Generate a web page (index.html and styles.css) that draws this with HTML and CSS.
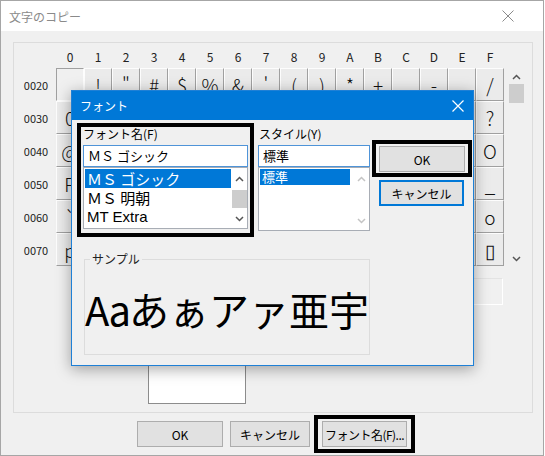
FILE: index.html
```html
<!DOCTYPE html>
<html lang="ja">
<head>
    <meta charset="UTF-8">
    <title>文字のコピー</title>
    <link rel="stylesheet" href="styles.css">
</head>
<body>
    <div class="window">
        <!-- Title bar -->
        <div class="titlebar">
            <span class="title">文字のコピー</span>
            <svg class="close" width="12" height="12" viewBox="0 0 12 12">
                <path d="M0.5 0.5 L11.5 11.5 M11.5 0.5 L0.5 11.5" stroke="#8a8a8a" stroke-width="1" fill="none"/>
            </svg>
        </div>

        <div class="content">
            <div class="group">
                <div class="map-row">
                    <div class="charmap" id="charmap"></div>
                    <div class="vscroll">
                        <svg width="9" height="6" viewBox="0 0 9 6"><polyline points="1,5 4.5,1.5 8,5" stroke="#555" stroke-width="1.5" fill="none"/></svg>
                        <div class="thumb"></div>
                        <div class="track"></div>
                        <svg width="9" height="6" viewBox="0 0 9 6"><polyline points="1,1 4.5,4.5 8,1" stroke="#555" stroke-width="1.5" fill="none"/></svg>
                    </div>
                </div>
                <div class="copy-box"></div>
                <div class="preview"></div>
            </div>

            <div class="actions">
                <button class="btn btn-ok">OK</button>
                <button class="btn btn-cancel">キャンセル</button>
                <div class="mark mark-font">
                    <button class="btn btn-font">フォント名(F)...</button>
                </div>
            </div>
        </div>
    </div>

    <!-- Font dialog -->
    <div class="dialog">
        <div class="dlg-title">
            <span>フォント</span>
            <svg width="12" height="12" viewBox="0 0 12 12">
                <path d="M0.5 0.5 L11.5 11.5 M11.5 0.5 L0.5 11.5" stroke="#fff" stroke-width="1.2" fill="none"/>
            </svg>
        </div>
        <div class="dlg-body">
            <div class="dlg-top">
                <div class="mark font-field">
                    <div class="label">フォント名(F)</div>
                    <div class="input">ＭＳ ゴシック</div>
                    <div class="list">
                        <div class="items">
                            <div class="item selected">ＭＳ ゴシック</div>
                            <div class="item">ＭＳ 明朝</div>
                            <div class="item latin">MT Extra</div>
                        </div>
                        <div class="lscroll">
                            <svg width="9" height="6" viewBox="0 0 9 6"><polyline points="1,5 4.5,1.5 8,5" stroke="#555" stroke-width="1.5" fill="none"/></svg>
                            <div class="lthumb"></div>
                            <svg width="9" height="6" viewBox="0 0 9 6"><polyline points="1,1 4.5,4.5 8,1" stroke="#555" stroke-width="1.5" fill="none"/></svg>
                        </div>
                    </div>
                </div>

                <div class="style-field">
                    <div class="label">スタイル(Y)</div>
                    <div class="input">標準</div>
                    <div class="list">
                        <div class="items">
                            <div class="item selected small">標準</div>
                        </div>
                        <div class="lscroll disabled">
                            <svg width="9" height="6" viewBox="0 0 9 6"><polyline points="1,5 4.5,1.5 8,5" stroke="#c4c4c4" stroke-width="1.5" fill="none"/></svg>
                            <svg width="9" height="6" viewBox="0 0 9 6"><polyline points="1,1 4.5,4.5 8,1" stroke="#c4c4c4" stroke-width="1.5" fill="none"/></svg>
                        </div>
                    </div>
                </div>

                <div class="dlg-buttons">
                    <div class="mark mark-ok">
                        <button class="btn btn-dlg">OK</button>
                    </div>
                    <button class="btn btn-dlg btn-focus">キャンセル</button>
                </div>
            </div>

            <fieldset class="sample">
                <legend>サンプル</legend>
                <div class="sample-text"><span class="half">Aa</span>あぁアァ亜宇</div>
            </fieldset>
        </div>
    </div>

    <script>
        // Build the character table: header row, then rows 0x20..0x70
        const map = document.getElementById('charmap');
        const hex = '0123456789ABCDEF';

        map.appendChild(document.createElement('div'));
        for (const h of hex) {
            const head = document.createElement('div');
            head.className = 'col-head';
            head.textContent = h;
            map.appendChild(head);
        }

        for (let r = 2; r <= 7; r++) {
            const label = document.createElement('div');
            label.className = 'row-head';
            label.textContent = '00' + r + '0';
            map.appendChild(label);
            for (let c = 0; c < 16; c++) {
                const code = r * 16 + c;
                const cell = document.createElement('div');
                cell.className = 'cell';
                if (code === 0x20) cell.classList.add('pressed');
                cell.textContent = code === 0x7f ? '▯' : String.fromCharCode(code);
                map.appendChild(cell);
            }
        }
    </script>
</body>
</html>
```

FILE: styles.css
```css
body {
    margin: 0;
    background-color: #fff;
    font-family: "Noto Sans CJK JP", "Liberation Sans", sans-serif;
    font-size: 12px;
    color: #000;
}

.window {
    width: 544px;
    height: 456px;
    box-sizing: border-box;
    border: 1px solid #a6a6a6;
    background-color: #f0f0f0;
}

.titlebar {
    height: 30px;
    display: flex;
    align-items: center;
    justify-content: space-between;
    padding: 0 29px 0 8px;
    background-color: #fff;
}

.title {
    color: #8a8a8a;
    font-size: 12px;
}

.content {
    padding: 11px 0 0 12px;
}

/* Character table group */
.group {
    width: 520px;
    height: 371px;
    box-sizing: border-box;
    border: 1px solid #dcdcdc;
}

.map-row {
    display: flex;
}

.charmap {
    display: grid;
    grid-template-columns: 42px repeat(16, 28px);
    grid-template-rows: 25px repeat(6, 33px);
}

.col-head {
    display: flex;
    align-items: center;
    justify-content: center;
    padding-top: 2px;
    font-size: 12px;
    color: #222;
}

.row-head {
    display: flex;
    align-items: center;
    justify-content: center;
    padding-left: 2px;
    font-size: 11px;
    color: #222;
}

.cell {
    display: flex;
    align-items: center;
    justify-content: center;
    box-sizing: border-box;
    background-color: #ebebeb;
    border: 1px solid;
    border-color: #fdfdfd #a0a0a0 #a0a0a0 #fdfdfd;
    font-size: 19px;
    font-weight: 300;
    color: #111;
}

.cell.pressed {
    background-color: #f0f0f0;
    border-color: #a0a0a0 #fdfdfd #fdfdfd #a0a0a0;
}

.vscroll {
    width: 16px;
    height: 200px;
    margin: 25px 0 0 4px;
    display: flex;
    flex-direction: column;
    align-items: center;
}

.vscroll svg {
    margin-top: 6px;
}

.vscroll .thumb {
    width: 15px;
    height: 19px;
    margin-top: 4px;
    background-color: #cdcdcd;
}

.vscroll .track {
    flex: 1;
}

.vscroll svg:last-child {
    margin: 0 0 6px 0;
}

.copy-box {
    width: 213px;
    height: 27px;
    box-sizing: border-box;
    margin: 10px 0 0 276px;
    border: 1px solid #e3e3e3;
    border-right-color: #fff;
    border-bottom-color: #fff;
}

.preview {
    width: 98px;
    height: 90px;
    box-sizing: border-box;
    margin: 9px 0 0 134px;
    background-color: #fff;
    border: 1px solid #8c8c8c;
}

/* Buttons */
.btn {
    height: 26px;
    padding: 0;
    box-sizing: border-box;
    background-color: #e1e1e1;
    border: 1px solid #adadad;
    font-family: "Noto Sans CJK JP", "Liberation Sans", sans-serif;
    font-size: 12px;
    color: #000;
    white-space: nowrap;
}

.actions {
    display: flex;
    align-items: center;
    height: 38px;
    margin-top: 2px;
    padding-left: 124px;
}

.btn-ok {
    width: 86px;
}

.btn-cancel {
    width: 80px;
    margin-left: 7px;
}

/* thick black highlight frames */
.mark {
    border: 4px solid #000;
}

.mark-font {
    margin-left: 4px;
    padding: 2px 4px;
}

.btn-font {
    width: 85px;
    letter-spacing: -0.5px;
}

/* Font dialog */
.dialog {
    position: absolute;
    left: 71px;
    top: 90px;
    width: 403px;
    height: 276px;
    box-sizing: border-box;
    border: 1px solid #1f80d6;
    background-color: #f0f0f0;
    box-shadow: 0 3px 14px rgba(0, 0, 0, 0.35);
}

.dlg-title {
    height: 29px;
    display: flex;
    align-items: center;
    justify-content: space-between;
    padding: 0 9px 0 8px;
    background-color: #0078d7;
    color: #fff;
}

.dlg-body {
    padding: 3px 0 0 5px;
}

.dlg-top {
    display: flex;
    align-items: flex-start;
}

.label {
    height: 14px;
    line-height: 14px;
    font-size: 12px;
}

.input {
    height: 22px;
    box-sizing: border-box;
    margin-top: 4px;
    padding-left: 4px;
    border: 1px solid #4f94d8;
    background-color: #fff;
    line-height: 20px;
    font-size: 13px;
}

.list {
    display: flex;
    box-sizing: border-box;
    border: 1px solid #a8adb5;
    background-color: #fff;
}

.items {
    flex: 1;
    padding: 1px 0 0 1px;
}

.item {
    height: 19px;
    line-height: 19px;
    padding-left: 2px;
    font-size: 15px;
    white-space: pre;
}

.item.latin {
    font-family: "Liberation Sans", sans-serif;
}

.item.selected {
    background-color: #0078d7;
    color: #fff;
}

.item.small {
    width: 88px;
    height: 16px;
    line-height: 16px;
    font-size: 13px;
}

.lscroll {
    width: 16px;
    display: flex;
    flex-direction: column;
    align-items: center;
    justify-content: space-between;
    padding: 8px 0 6px;
}

.lthumb {
    width: 15px;
    height: 18px;
    background-color: #cdcdcd;
}

.font-field {
    width: 177px;
    box-sizing: border-box;
    padding: 0 2px 4px;
}

.font-field .list {
    height: 62px;
}

.style-field {
    width: 112px;
    margin-left: 4px;
    padding-top: 4px;
}

.style-field .label {
    padding-left: 1px;
}

.style-field .list {
    height: 64px;
}

.dlg-buttons {
    display: flex;
    flex-direction: column;
    margin: 17px 0 0 2px;
}

.mark-ok {
    padding: 2px 3px 1px;
}

.btn-dlg {
    width: 86px;
}

.btn-focus {
    width: 85px;
    margin: 3px 0 0 7px;
    border: 2px solid #0078d7;
}

.sample {
    width: 286px;
    height: 103px;
    box-sizing: border-box;
    margin: 15px 0 0 7px;
    padding: 0;
    border: 1px solid #dcdcdc;
}

.sample legend {
    margin-left: 5px;
    padding: 0 2px;
    line-height: 14px;
    font-size: 12px;
    color: #222;
}

.sample-text {
    display: flex;
    justify-content: center;
    padding-top: 18px;
    font-size: 40px;
    line-height: 50px;
}

.half {
    letter-spacing: -2px;
}
```
